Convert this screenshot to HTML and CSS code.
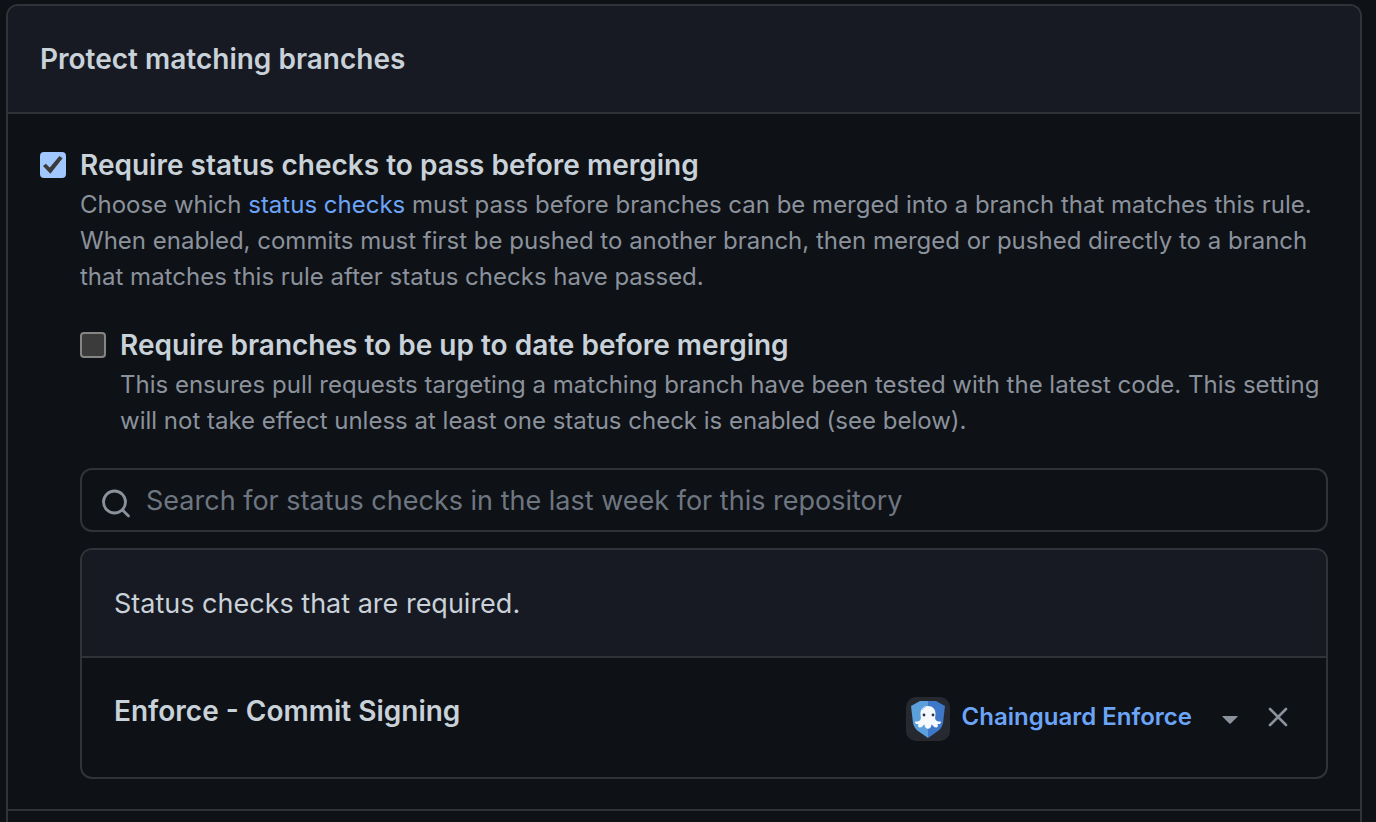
FILE: index.html
```html
<!DOCTYPE html>
<html lang="en">
<head>
<meta charset="utf-8">
<meta name="viewport" content="width=device-width, initial-scale=1">
<title>Protect matching branches</title>
<link rel="stylesheet" href="styles.css">
</head>
<body>
<main class="page">
  <form class="card">
    <header class="card-header">
      <h2 class="card-title">Protect matching branches</h2>
    </header>
    <section class="rule">
      <input class="checkbox" type="checkbox" id="require-checks" aria-describedby="require-checks-note" checked>
      <div class="rule-body">
        <label class="rule-label" for="require-checks">Require status checks to pass before merging</label>
        <p class="note" id="require-checks-note">Choose which <a class="link" href="#">status checks</a> must pass before branches can be merged into a branch that matches this rule. When enabled, commits must first be pushed to another branch, then merged or pushed directly to a branch that matches this rule after status checks have passed.</p>

        <div class="subrule">
          <input class="checkbox" type="checkbox" id="require-fresh" aria-describedby="require-fresh-note">
          <div class="rule-body">
            <label class="rule-label" for="require-fresh">Require branches to be up to date before merging</label>
            <p class="note" id="require-fresh-note">This ensures pull requests targeting a matching branch have been tested with the latest code. This setting will not take effect unless at least one status check is enabled (see below).</p>
          </div>
        </div>

        <div class="search">
          <svg class="search-icon" viewBox="0 0 32 32" aria-hidden="true"><circle cx="14.500" cy="14" r="11" fill="none" stroke="currentColor" stroke-width="2.800"/><path d="M22.500 22l6 6" stroke="currentColor" stroke-width="2.800" stroke-linecap="round"/></svg>
          <input class="search-input" type="text" aria-label="Search status checks" placeholder="Search for status checks in the last week for this repository">
        </div>

        <div class="checks">
          <div class="checks-header">Status checks that are required.</div>
          <div class="check">
            <strong class="check-name">Enforce - Commit Signing</strong>
            <div class="check-source">
              <svg class="app-logo" viewBox="0 0 44 44" aria-hidden="true">
                <rect width="44" height="44" rx="10" fill="#26292f"/>
                <path d="M22 4H14L5 9l2 17q.8 4.500 5 8L22 41z" fill="#5b9fdd"/>
                <path d="M22 4h8l9 5-2 17q-.8 4.500-5 8L22 41z" fill="#3f78c9"/>
                <path d="M22 9c-4.700 0-7.500 3.300-7.500 7.500 0 3 .8 4.300 0 6-.8 1.700-3 2.300-5.300 2-.5 2 .9 2.900 3.300 2.500-1 1.700-.4 3.400 1.300 3.500 2.200 0 3-2.200 4.700-3.100.2 2.500 1.300 4.300 3.500 4.300s3.300-1.800 3.500-4.300c1.700.9 2.500 3.100 4.700 3.100 1.700-.1 2.300-1.800 1.300-3.500 2.400.4 3.800-.5 3.300-2.500-2.300.3-4.500-.3-5.300-2-.8-1.700 0-3 0-6 0-4.200-2.800-7.500-7.500-7.500z" fill="#f5f8fc"/>
                <circle cx="18" cy="18" r="1.400" fill="#283449"/>
                <circle cx="27" cy="18" r="1.400" fill="#283449"/>
                <path d="M16 13q1-2.500 3.500-3" stroke="#9cc7ee" stroke-width="1" fill="none"/>
              </svg>
              <a class="app-link" href="#">Chainguard Enforce</a>
              <button class="icon-button" type="button" aria-label="Choose source">
                <svg class="caret" viewBox="0 0 16 8" aria-hidden="true"><path d="M.8 0h14.400q.8 0 .3.700L8.700 7.500q-.7.600-1.400 0L.5.700Q0 0 .8 0z" fill="currentColor"/></svg>
              </button>
              <button class="icon-button" type="button" aria-label="Remove check">
                <svg class="cross" viewBox="0 0 20 20" aria-hidden="true"><path d="M2 2l16 16M18 2L2 18" stroke="currentColor" stroke-width="2.600" stroke-linecap="round"/></svg>
              </button>
            </div>
          </div>
        </div>
      </div>
    </section>
    <div class="next-rule"></div>
  </form>
</main>
</body>
</html>
```
FILE: styles.css
```css
* { box-sizing: border-box; }

body {
  margin: 0;
  background: #0e1116;
  color: #c9d1d9;
  font-family: Inter, "Liberation Sans", sans-serif;
  font-size: 27px;
  line-height: 42px;
}

.page {
  display: flex;
  min-height: 100vh;
  padding: 4px 14px 0 6px;
}

.card {
  display: flex;
  flex: 1;
  flex-direction: column;
  min-width: 0;
  border: 2px solid #303338;
  border-bottom: 0;
  border-radius: 12px 12px 0 0;
}

.card-header {
  padding: 32px;
  border-bottom: 2px solid #303338;
  border-radius: 10px 10px 0 0;
  background: #171a22;
}

.card-title {
  margin: 0;
  font-size: 28px;
  font-weight: 600;
}

.rule {
  display: flex;
  gap: 14px;
  padding: 30px 32px;
}

.rule-body {
  flex: 1;
  min-width: 0;
}

.subrule {
  display: flex;
  gap: 14px;
  margin: 29px -10px 29px 0;
}

.checkbox {
  display: grid;
  flex: none;
  place-items: center;
  width: 26px;
  height: 26px;
  margin: 8px 0 0;
  appearance: none;
  border: 2px solid #858585;
  border-radius: 4px;
  background: #3b3b3b;
}

.checkbox:checked {
  border-color: #a0c7ff;
  background: #a0c7ff;
}

.checkbox:checked::after {
  content: "";
  width: 20px;
  height: 18px;
  background: #3b3b3b;
  clip-path: polygon(0 55%, 14% 43%, 34% 64%, 82% 0, 98% 13%, 37% 98%);
}

.rule-label {
  display: block;
  font-size: 28px;
  font-weight: 600;
}

.note {
  margin: 1px 0 0;
  color: #8b929c;
  font-size: 24px;
  line-height: 36px;
}

.link,
.app-link {
  color: #6ca4f8;
  text-decoration: none;
}

.search {
  display: flex;
  align-items: center;
  gap: 14px;
  height: 64px;
  padding: 0 18px;
  border: 2px solid #303338;
  border-radius: 12px;
}

.search-icon {
  flex: none;
  width: 32px;
  height: 32px;
  margin-top: 8px;
  color: #8b929c;
}

.search-input {
  flex: 1;
  min-width: 0;
  padding: 2px 0 0;
  border: 0;
  outline: 0;
  background: transparent;
  color: inherit;
  font: inherit;
}

.search-input::placeholder {
  color: #6e7681;
  opacity: 1;
}

.checks {
  margin-top: 16px;
  border: 2px solid #303338;
  border-radius: 12px;
}

.checks-header {
  padding: 33px 32px 31px;
  border-bottom: 2px solid #303338;
  border-radius: 10px 10px 0 0;
  background: #171a22;
}

.check {
  display: flex;
  justify-content: space-between;
  gap: 16px;
  padding: 32px 32px 36px;
}

.check-name {
  font-size: 28px;
  font-weight: 600;
}

.check-source {
  display: flex;
  align-items: flex-start;
  padding-top: 7px;
}

.app-logo {
  width: 44px;
  height: 44px;
  margin-right: 12px;
}

.app-link {
  margin-right: 24px;
  font-size: 24px;
  font-weight: 600;
  line-height: 40px;
}

.icon-button {
  display: grid;
  place-items: center;
  height: 40px;
  padding: 0 6px;
  border: 0;
  background: transparent;
  color: #8b929c;
}

.icon-button + .icon-button {
  margin-left: 18px;
}

.caret {
  width: 16px;
  height: 8px;
  margin-top: 6px;
}

.cross {
  width: 20px;
  height: 20px;
}

.next-rule {
  flex: 1;
  border-top: 2px solid #303338;
}
```
